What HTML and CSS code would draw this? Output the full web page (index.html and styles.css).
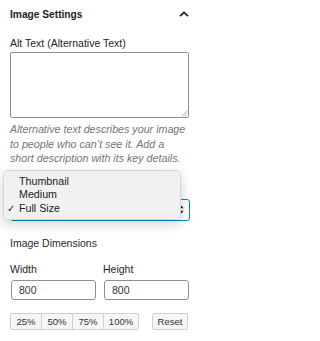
FILE: index.html
```html
<!DOCTYPE html>
<html>
<head>
<meta charset="utf-8">
<link rel="stylesheet" href="styles.css">
</head>
<body>
<div class="panel">
  <div class="panel-header">
    <span class="panel-title">Image Settings</span>
    <svg class="chevron" width="10" height="6" viewBox="0 0 10 6"><path d="M1 5.2 L5 1.4 L9 5.2" fill="none" stroke="#1e1e1e" stroke-width="1.7"/></svg>
  </div>

  <div class="field">
    <label class="label">Alt Text (Alternative Text)</label>
    <div class="textarea"><svg class="grip" width="6" height="6" viewBox="0 0 6 6"><path d="M1 6 L6 1 M3.5 6 L6 3.5" stroke="#9a9a9a" stroke-width="0.8"/></svg></div>
    <p class="help">Alternative text describes your image to people who can’t see it. Add a short description with its key details.</p>
  </div>

  <div class="size-field">
    <div class="select">
      <span>Full Size</span>
      <svg class="updown" width="5" height="9" viewBox="0 0 5 9"><path d="M2.5 0.5 L4.6 3.3 L0.4 3.3 Z M2.5 8.5 L4.6 5.7 L0.4 5.7 Z" fill="#1e1e1e"/></svg>
    </div>
    <ul class="menu">
      <li class="menu-item">Thumbnail</li>
      <li class="menu-item">Medium</li>
      <li class="menu-item selected"><span class="check">✓</span>Full Size</li>
    </ul>
  </div>

  <div class="dims">
    <div class="dims-title">Image Dimensions</div>
    <div class="dims-grid">
      <div class="dim">
        <label class="label">Width</label>
        <div class="input">800</div>
      </div>
      <div class="dim">
        <label class="label">Height</label>
        <div class="input">800</div>
      </div>
    </div>
    <div class="buttons">
      <div class="btn-group">
        <span class="btn">25%</span><span class="btn">50%</span><span class="btn">75%</span><span class="btn">100%</span>
      </div>
      <span class="btn reset">Reset</span>
    </div>
  </div>
</div>
</body>
</html>
```

FILE: styles.css
```css
* { box-sizing: border-box; }
html, body {
  margin: 0;
  padding: 0;
  background: #fff;
}
body {
  font-family: "Liberation Sans", Arial, sans-serif;
  color: #1e1e1e;
  font-size: 10.5px;
  width: 200px;
  height: 341px;
  overflow: hidden;
}
.panel {
  padding: 0 11px 0 10px;
}
.panel-header {
  display: flex;
  justify-content: space-between;
  align-items: center;
  height: 28px;
  padding-top: 1px;
}
.panel-title {
  font-weight: bold;
  font-size: 10.2px;
}
.chevron {
  margin-top: -2px;
}
.field {
  margin-top: 9px;
}
.label {
  display: block;
  line-height: 13px;
  font-size: 10.5px;
  color: #1e1e1e;
}
.textarea {
  position: relative;
  margin-top: 2px;
  height: 66px;
  border: 1px solid #8c8f94;
  border-radius: 2px;
  width: 179px;
}
.grip {
  position: absolute;
  right: 1px;
  bottom: 1px;
}
.help {
  margin: 4px 0 0;
  font-style: italic;
  color: #757575;
  font-size: 10.7px;
  line-height: 14.5px;
}
.size-field {
  position: relative;
  margin-top: 33px;
}
.select {
  height: 22px;
  border: 1.5px solid #0a85c2;
  border-radius: 3px;
  display: flex;
  align-items: center;
  justify-content: space-between;
  padding: 0 5px 0 8px;
  width: 180px;
}
.updown { display: block; }
.menu {
  position: absolute;
  left: -7px;
  top: -29px;
  width: 178px;
  height: 50px;
  margin: 0;
  padding: 4px 0 0;
  list-style: none;
  background: #f1f1f1;
  border: 1px solid #d8d8d8;
  border-radius: 5px;
  box-shadow: 0 4px 12px rgba(0,0,0,0.18);
}
.menu-item {
  position: relative;
  height: 13.5px;
  line-height: 13.5px;
  padding-left: 15px;
  font-size: 10.7px;
  color: #222;
}
.check {
  position: absolute;
  left: 3px;
  top: 0;
  font-size: 9.5px;
}
.dims {
  margin-top: 16px;
}
.dims-title {
  line-height: 13px;
  color: #2c2c2c;
}
.dims-grid {
  display: grid;
  grid-template-columns: 86px 86px;
  column-gap: 7px;
  margin-top: 13px;
}
.dim .label {
  margin-bottom: 4px;
}
.input {
  height: 20px;
  border: 1px solid #8c8f94;
  border-radius: 3px;
  margin-left: 1px;
  padding-left: 7px;
  line-height: 18px;
  font-size: 10.5px;
  color: #333;
}
.buttons {
  display: flex;
  justify-content: space-between;
  margin-top: 13px;
  width: 178px;
}
.btn-group {
  display: flex;
}
.btn {
  display: inline-block;
  height: 17px;
  line-height: 15px;
  border: 1px solid #d0d0d0;
  background: #f6f6f6;
  font-size: 9.5px;
  color: #333;
  text-align: center;
}
.btn-group .btn {
  width: 31px;
  border-right-width: 0;
}
.btn-group .btn:first-child { border-radius: 2px 0 0 2px; }
.btn-group .btn:last-child {
  width: 36px;
  border-right-width: 1px;
  border-radius: 0 2px 2px 0;
}
.btn.reset {
  width: 36px;
  border-radius: 2px;
}
```
